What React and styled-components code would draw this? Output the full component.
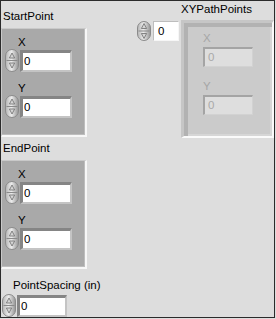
import React, { useId } from 'react';
import styled, { css, createGlobalStyle } from 'styled-components';

const GlobalStyle = createGlobalStyle`
  html, body {
    margin: 0;
    padding: 0;
    background: #dddddd;
  }
  body {
    font-family: "Liberation Sans", Arial, sans-serif;
    font-size: 11.5px;
  }
`;

const Spinner = ({ width = 14, height = 23 }) => {
  const id = useId();
  const mid = height / 2;
  return (
    <svg width={width} height={height} viewBox={`0 0 ${width} ${height}`} style={{ flex: 'none' }}>
      <defs>
        <linearGradient id={id} x1="0" x2="1" y1="0" y2="0">
          <stop offset="0" stopColor="#b3b3b3" />
          <stop offset="0.45" stopColor="#ececec" />
          <stop offset="1" stopColor="#949494" />
        </linearGradient>
      </defs>
      <rect
        x="0.5"
        y="0.5"
        width={width - 1}
        height={height - 1}
        rx={(width - 1) / 2}
        fill={`url(#${id})`}
        stroke="#8a8a8a"
      />
      <line x1="1.5" x2={width - 1.5} y1={mid} y2={mid} stroke="#8a8a8a" />
      <path
        d={`M${width / 2} ${mid - 7.5} L${width / 2 + 2.6} ${mid - 2.5} H${width / 2 - 2.6} Z`}
        fill="#d6d6d6"
        stroke="#6c6c6c"
        strokeWidth="0.8"
      />
      <path
        d={`M${width / 2} ${mid + 7.5} L${width / 2 + 2.6} ${mid + 2.5} H${width / 2 - 2.6} Z`}
        fill="#d6d6d6"
        stroke="#6c6c6c"
        strokeWidth="0.8"
      />
    </svg>
  );
};

const Panel = styled.div`
  box-sizing: border-box;
  width: 275px;
  height: 318px;
  border: 1px solid #2b2b2b;
  background: #dddddd;
  display: flex;
  align-items: flex-start;
  overflow: hidden;
`;

const LeftColumn = styled.div`
  width: 86px;
  padding-top: 9px;
  display: flex;
  flex-direction: column;
`;

const Section = styled.div`
  display: flex;
  flex-direction: column;
  margin-top: ${props => props.$gap || 0}px;
`;

const Caption = styled.div`
  height: 13px;
  line-height: 13px;
  padding-left: ${props => props.$indent || 0}px;
  margin-bottom: ${props => props.$below || 0}px;
  color: #000;
  white-space: nowrap;
`;

const Cluster = styled.div`
  box-sizing: border-box;
  width: 86px;
  height: 109px;
  padding: 7px 0 0 3px;
  background: #a9a9a9;
  border-style: solid;
  border-width: 1px 2px 2px 1px;
  border-color: #c9c9c9 #f7f7f7 #f7f7f7 #c9c9c9;
  box-shadow: inset -1px -1px 0 #bdbdbd;
  display: flex;
  flex-direction: column;
`;

const FieldLabel = styled.div`
  height: 13px;
  line-height: 13px;
  margin-left: ${props => props.$indent || 0}px;
  margin-top: ${props => props.$top || 0}px;
  color: ${props => (props.$disabled ? '#a6a6a6' : '#000')};
`;

const Row = styled.div`
  display: flex;
  align-items: center;
  gap: ${props => props.$gap || 1}px;
  margin-top: ${props => props.$top || 0}px;
  padding-left: ${props => props.$indent || 0}px;
`;

const variants = {
  normal: css`
    background: #ffffff;
    border-width: 3px 2px 2px 3px;
    border-color: #858585 #c4c4c4 #c4c4c4 #858585;
    padding-left: 1px;
    color: #000;
  `,
  index: css`
    background: #ffffff;
    border-width: 1px;
    border-color: #bdbdbd #f6f6f6 #f6f6f6 #bdbdbd;
    padding-left: 4px;
    color: #000;
  `,
  disabled: css`
    background: #dedede;
    border-width: 2px 1px 1px 2px;
    border-color: #a4a4a4 #d2d2d2 #d2d2d2 #a4a4a4;
    padding-left: 3px;
    color: #a9a9a9;
  `
};

const NumBox = styled.div`
  box-sizing: border-box;
  width: ${props => props.$w}px;
  height: ${props => props.$h}px;
  margin-top: ${props => props.$top || 0}px;
  display: flex;
  align-items: center;
  border-style: solid;
  line-height: 13px;
  ${props => variants[props.$variant || 'normal']}
`;

const ArrayBlock = styled.div`
  margin-left: 50px;
  padding-top: 2px;
  display: grid;
  grid-template-columns: 42px 93px;
  column-gap: 2px;
  row-gap: 4px;
`;

const ArrayCaption = styled(Caption)`
  grid-column: 2;
`;

const IndexControl = styled.div`
  grid-column: 1;
  display: flex;
  align-items: center;
  gap: 2px;
  margin-top: 1px;
  align-self: start;
`;

const ArrayFrame = styled.div`
  box-sizing: border-box;
  width: 93px;
  height: 118px;
  padding: 9px 0 0 19px;
  background: #cbcbcb;
  border-style: solid;
  border-width: 3px 2px 2px 3px;
  border-color: #c6c6c6 #fafafa #fafafa #c6c6c6;
  box-shadow: inset 4px 4px 0 #b2b2b2, inset -2px -2px 0 #d6d6d6;
  display: flex;
  flex-direction: column;
`;

const ClusterFields = () => (
  <>
    <FieldLabel $indent={13}>X</FieldLabel>
    <Row>
      <Spinner />
      <NumBox $w={52} $h={22}>0</NumBox>
    </Row>
    <FieldLabel $indent={13} $top={10}>Y</FieldLabel>
    <Row>
      <Spinner />
      <NumBox $w={52} $h={22}>0</NumBox>
    </Row>
  </>
);

const App = () => (
  <>
    <GlobalStyle />
    <Panel>
      <LeftColumn>
        <Section>
          <Caption $indent={2} $below={5}>StartPoint</Caption>
          <Cluster>
            <ClusterFields />
          </Cluster>
        </Section>
        <Section $gap={5}>
          <Caption $indent={2} $below={5}>EndPoint</Caption>
          <Cluster>
            <ClusterFields />
          </Cluster>
        </Section>
        <Section $gap={10}>
          <Caption $indent={12} $below={2}>PointSpacing (in)</Caption>
          <Row $indent={1}>
            <Spinner />
            <NumBox $w={50} $h={22}>0</NumBox>
          </Row>
        </Section>
      </LeftColumn>

      <ArrayBlock>
        <ArrayCaption>XYPathPoints</ArrayCaption>
        <IndexControl>
          <Spinner height={20} />
          <NumBox $variant="index" $w={26} $h={20}>0</NumBox>
        </IndexControl>
        <ArrayFrame>
          <FieldLabel $disabled>X</FieldLabel>
          <NumBox $variant="disabled" $w={50} $h={20} $top={2}>0</NumBox>
          <FieldLabel $disabled $top={13}>Y</FieldLabel>
          <NumBox $variant="disabled" $w={50} $h={20} $top={2}>0</NumBox>
        </ArrayFrame>
      </ArrayBlock>
    </Panel>
  </>
);

export default App;
